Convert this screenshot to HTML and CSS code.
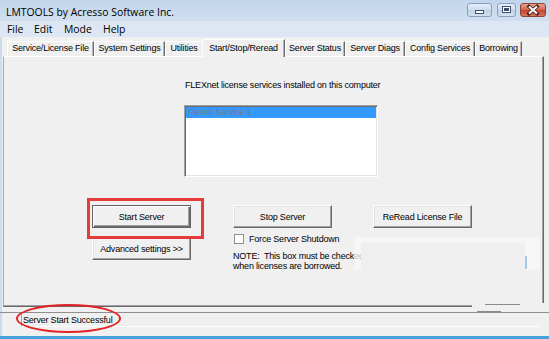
FILE: index.html
```html
<!DOCTYPE html>
<html>
<head>
<meta charset="utf-8">
<title>LMTOOLS</title>
<link rel="stylesheet" href="styles.css">
</head>
<body>
<div class="window">
  <div class="titlebar">
    <span class="title">LMTOOLS by Acresso Software Inc.</span>
    <div class="controls">
      <span class="wbtn min"><svg width="25" height="14" viewBox="0 0 25 14"><rect x="8.5" y="7.5" width="8" height="3" fill="#fff" stroke="#3d4f6b"/></svg></span>
      <span class="wbtn max"><svg width="19" height="14" viewBox="0 0 19 14"><rect x="5.5" y="3.5" width="8" height="6" fill="#3d4f6b" stroke="#3d4f6b"/><rect x="6.5" y="4.5" width="6" height="4" fill="none" stroke="#fff"/><rect x="7.5" y="5.5" width="4" height="2" fill="#3d4f6b"/></svg></span>
      <span class="wbtn close"><svg width="26" height="14" viewBox="0 0 26 14"><path d="M9 3.5 L17 10.5 M17 3.5 L9 10.5" stroke="#4a2018" stroke-width="3.6" stroke-linecap="square"/><path d="M9 3.5 L17 10.5 M17 3.5 L9 10.5" stroke="#fff" stroke-width="2"/></svg></span>
    </div>
  </div>
  <div class="menubar">
    <span>File</span><span>Edit</span><span>Mode</span><span>Help</span>
  </div>
  <div class="tabs">
    <span class="tab t1">Service/License File</span>
    <span class="tab t2">System Settings</span>
    <span class="tab t3">Utilities</span>
    <span class="tab on">Start/Stop/Reread</span>
    <span class="tab t5">Server Status</span>
    <span class="tab t6">Server Diags</span>
    <span class="tab t7">Config Services</span>
    <span class="tab t8">Borrowing</span>
  </div>
  <div class="page">
    <div class="services">
      <div class="caption">FLEXnet license services installed on this computer</div>
      <div class="listbox">
        <div class="item sel">Flexlm Service 1</div>
      </div>
    </div>
    <div class="actions">
      <div class="cell"><span class="highlight"><span class="btn default">Start Server</span></span></div>
      <div class="cell"><span class="btn">Stop Server</span></div>
      <div class="cell"><span class="btn">ReRead License File</span></div>
      <div class="cell"><span class="btn adv">Advanced settings &gt;&gt;</span></div>
      <div class="cell wide">
        <div class="check"><span class="box"></span><span>Force Server Shutdown</span></div>
        <div class="note">NOTE:  This box must be checked for shutdown
when licenses are borrowed.</div>
      </div>
    </div>
    <div class="smudge"></div>
    <div class="smudge-inner"></div>
    <div class="smudge-mark"></div>
  </div>
  <div class="status">
    <span class="panel">Server Start Successful</span>
  </div>
  <div class="frame-bottom"></div>
</div>
<div class="patch"><span class="seg s1"></span><span class="seg s2"></span></div>
<div class="ellipse"></div>
</body>
</html>
```
FILE: styles.css
```css
* { box-sizing: border-box; margin: 0; padding: 0; }
html, body { width: 549px; height: 339px; overflow: hidden; }
body {
  background: #f0f0f0;
  font-family: "Liberation Sans", Arial, sans-serif;
  font-size: 9px;
  letter-spacing: -0.2px;
  color: #000;
  position: relative;
}
.window {
  display: flex;
  flex-direction: column;
  height: 339px;
  box-shadow: inset 2px 0 #cddbec;
}

/* title bar */
.titlebar {
  height: 21px;
  display: flex;
  align-items: flex-start;
  background: linear-gradient(#c3d5ec, #d1dff0);
  font-family: "Open Sans", "Noto Sans", sans-serif;
  font-size: 10.4px;
  letter-spacing: 0;
  color: #000;
}
.title { padding: 4px 0 0 6px; line-height: 17px; }
.controls { margin-left: auto; display: flex; padding-top: 3px; padding-right: 3px; }
.wbtn {
  display: block;
  height: 14px;
  border: 1px solid #8a9fbd;
  border-radius: 3px;
  background: linear-gradient(#e6eef8, #cddbee 50%, #bfd0e8 51%, #d3e1f2);
  overflow: hidden;
}
.wbtn svg { display: block; margin: -1px; }
.min { width: 25px; }
.max { width: 19px; margin-left: 5px; }
.close {
  width: 26px;
  margin-left: 4px;
  border-color: #8a4336;
  background: linear-gradient(#e8a08f, #d4634e 50%, #c4412b 51%, #d7735d);
}

/* menu */
.menubar {
  height: 16px;
  background: #dde6f3;
  display: grid;
  grid-template-columns: 27px 30px 39px auto;
  padding-left: 7px;
  font-family: "Open Sans", "Noto Sans", sans-serif;
  font-size: 10.4px;
  letter-spacing: 0;
  line-height: 16px;
}

/* tabs */
.tabs {
  height: 19px;
  display: flex;
  align-items: flex-end;
  padding-left: 7px;
}
.tab {
  display: block;
  height: 15px;
  line-height: 13px;
  text-align: center;
  white-space: nowrap;
  border-top: 1px solid #fff;
  border-left: 1px solid #fff;
  border-right: 1px solid #696969;
  box-shadow: inset -1px 0 #b4b4b4;
}
.t1 { width: 87px; }
.t2 { width: 71px; }
.t3 { width: 37px; border-right: none; box-shadow: none; }
.t5 { width: 60px; }
.t6 { width: 60px; }
.t7 { width: 70px; }
.t8 { width: 47px; }
.tab.on {
  width: 83px;
  height: 18px;
  padding-top: 2px;
  margin-bottom: -1px;
  position: relative;
  z-index: 1;
  background: #f0f0f0;
}

/* page */
.page {
  position: relative;
  margin-left: 3px;
  width: 541px;
  height: 251px;
  border-top: 1px solid #fff;
  border-left: 1px solid #a8a8a8;
  border-right: 1px solid #696969;
  border-bottom: 1px solid #696969;
  box-shadow: inset -1px -1px #a0a0a0;
}
.services { margin-left: 180px; padding-top: 23px; }
.caption { margin-left: 1px; line-height: 11px; white-space: nowrap; }
.listbox {
  margin-top: 14px;
  width: 194px;
  height: 72px;
  background: #fff;
  border: 1px solid;
  border-color: #a0a0a0 #fff #fff #a0a0a0;
  box-shadow: inset 1px 1px #696969, inset -1px -1px #e3e3e3;
  padding: 1px;
}
.item { height: 11px; line-height: 11px; padding-left: 2px; white-space: nowrap; }
.item.sel { background: #3399ff; color: #777b80; }

.actions {
  margin-top: 28px;
  margin-left: 88px;
  display: grid;
  grid-template-columns: 141px 140px 99px;
  row-gap: 6px;
}
.cell.wide { grid-column: 2 / 4; }
.highlight { position: relative; display: block; width: 99px; }
.highlight::after {
  content: "";
  position: absolute;
  left: -5px;
  top: -7px;
  width: 111px;
  height: 35px;
  border: 3px solid #e63b3b;
}
.btn {
  display: flex;
  align-items: center;
  justify-content: center;
  width: 99px;
  height: 23px;
  background: #f0f0f0;
  border: 1px solid;
  border-color: #fff #696969 #696969 #fff;
  box-shadow: inset -1px -1px #a0a0a0, inset 1px 1px #e3e3e3;
  white-space: nowrap;
}
.btn.default {
  border-color: #646464;
  box-shadow: inset 1px 1px #fff, inset -1px -1px #696969, inset -2px -2px #a0a0a0;
}
.btn.adv { margin-top: 3px; }
.check { display: flex; align-items: center; height: 10px; margin-left: 1px; white-space: nowrap; }
.box {
  width: 10px;
  height: 10px;
  border: 1px solid #8e8f8f;
  background: #fff;
  margin-right: 5px;
}
.note { margin-top: 7px; line-height: 10px; white-space: pre; }

/* artefacts over the page */
.smudge {
  position: absolute;
  left: 350px;
  top: 180px;
  width: 186px;
  height: 33px;
  background: rgba(248, 248, 248, 0.75);
}
.smudge-inner {
  position: absolute;
  left: 357px;
  top: 186px;
  width: 164px;
  height: 30px;
  background: #efefef;
}
.smudge-mark {
  position: absolute;
  left: 521px;
  top: 199px;
  width: 2px;
  height: 13px;
  background: #a4c9ea;
}

/* status bar */
.status {
  margin-top: 5px;
  height: 24px;
  border-top: 1px solid #8f8f8f;
  padding-left: 21px;
}
.panel {
  display: block;
  width: 519px;
  height: 14px;
  padding: 1px 0 0 1px;
  line-height: 12px;
  border-left: 1px solid #a0a0a0;
  border-bottom: 1px solid #fdfdfd;
  white-space: nowrap;
}
.frame-bottom { height: 3px; background: #48a2da; }

.patch {
  position: absolute;
  left: 472px;
  top: 303px;
  width: 72px;
  height: 9px;
  background: #f0f0f0;
}
.seg { position: absolute; height: 1px; background: #8a8a8a; }
.s1 { left: 13px; top: 1px; width: 35px; }
.s2 { left: 5px; top: 8px; width: 24px; }

.ellipse {
  position: absolute;
  left: 16px;
  top: 304px;
  width: 105px;
  height: 29px;
  border: 2px solid #e02424;
  border-radius: 50%;
}
```
